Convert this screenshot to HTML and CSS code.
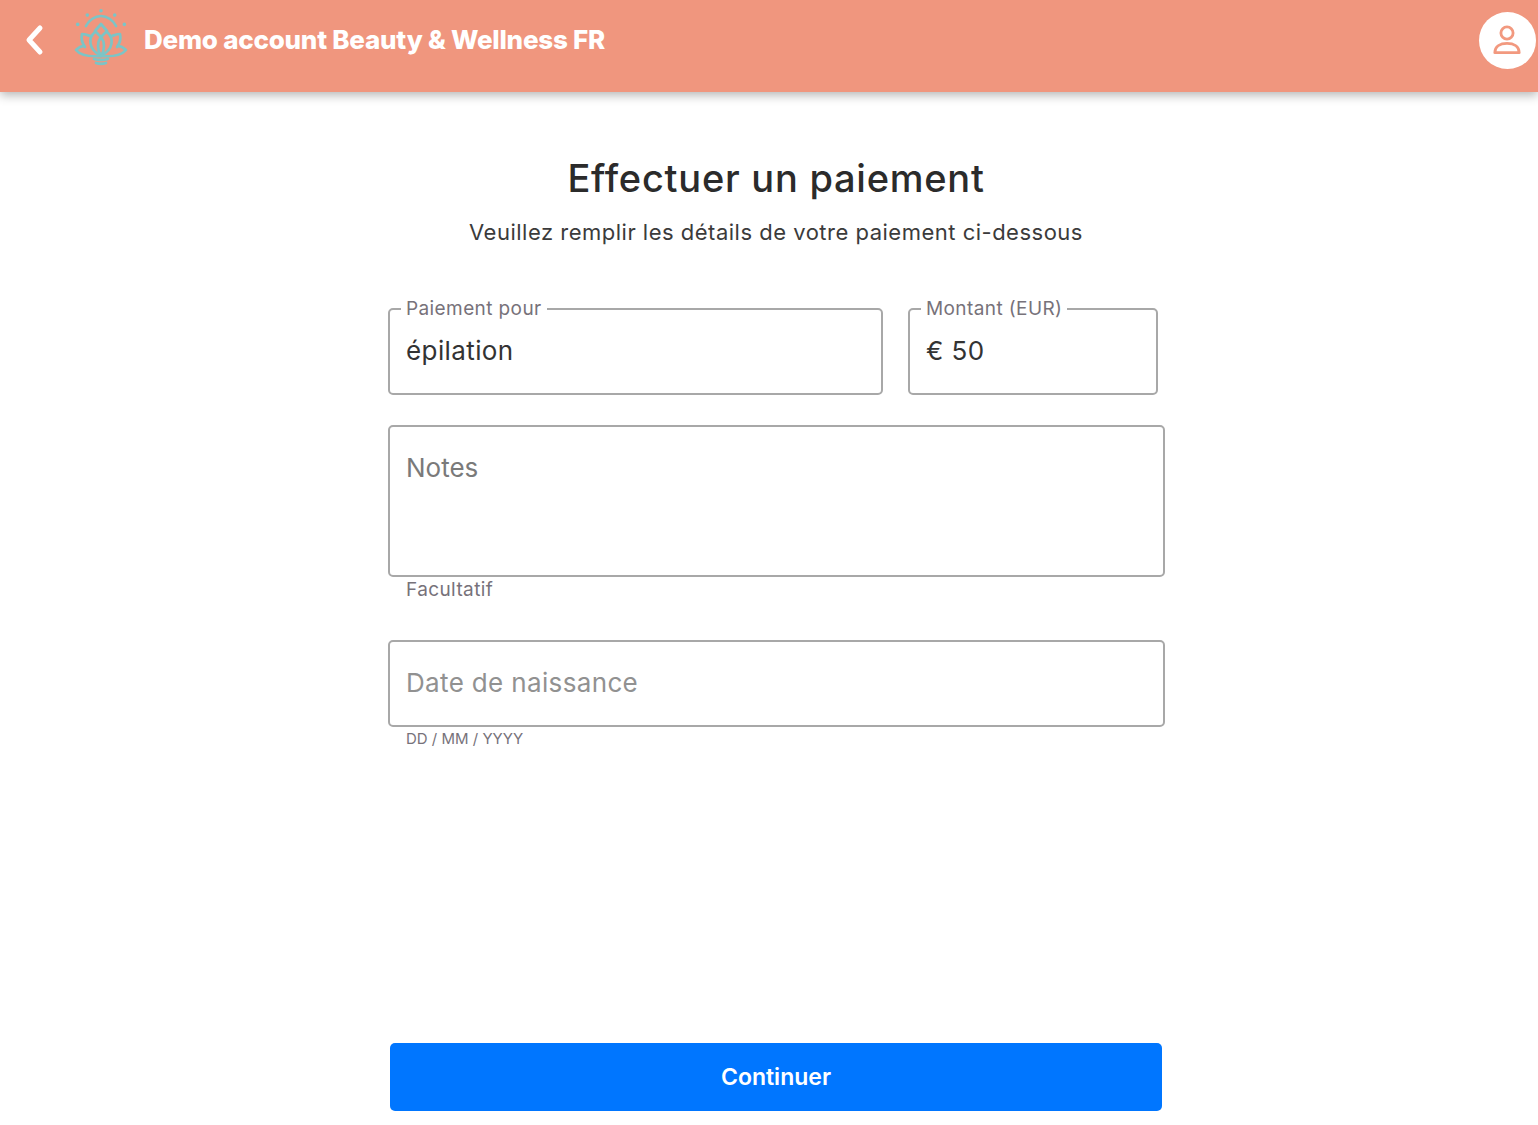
FILE: index.html
```html
<!DOCTYPE html>
<html lang="fr">
  <head>
    <meta charset="UTF-8" />
    <meta name="viewport" content="width=device-width, initial-scale=1.0" />
    <title>Effectuer un paiement</title>
    <link rel="stylesheet" href="styles.css">
  </head>
  <body>
    <header class="topbar">
      <svg class="back" viewBox="0 0 20 32" fill="none" stroke="#fff" stroke-width="5" stroke-linecap="round" stroke-linejoin="round">
        <path d="M16 4 5 16l11 12" />
      </svg>
      <svg class="logo" viewBox="0 0 64 64" fill="none" stroke="#7cc4c6" stroke-width="2.7" stroke-linecap="round" stroke-linejoin="round">
        <path d="M16 21C19 15 25 11 31 11s12 4 15 10" />
        <path d="M31 19l6 7-6 6-6-6Z" />
        <path d="M25 27C18 33 18 44 31 51 44 44 44 33 37 27" />
        <path d="M31 32c-4 5-4 13 0 19 4-6 4-14 0-19Z" />
        <path d="M20 31c-3-1-5-2-8-2-1 4 0 9 3 13" />
        <path d="M42 31c3-1 5-2 8-2 1 4 0 9-3 13" />
        <path d="M14 41c-3 0-6 2-8 4 4 5 12 7 25 6" />
        <path d="M48 41c3 0 6 2 8 4-4 5-12 7-25 6" />
        <path d="M24 54c4 1 10 1 14 0M26 58c3 1 7 1 10 0" />
        <path d="M31 5.7v.1M17.3 10v.1M44.7 10v.1M7.7 19.3v.1M54.3 19.3v.1" stroke-width="3.6" />
      </svg>
      <h2 class="brand">Demo account Beauty &amp; Wellness FR</h2>
      <div class="avatar">
        <svg viewBox="0 0 32 34" fill="none" stroke="#f2997f" stroke-width="3" stroke-linecap="round" stroke-linejoin="round">
          <circle cx="16" cy="9" r="6.5" />
          <path d="M3 30c0-7 6-10 13-10s13 3 13 10Z" />
        </svg>
      </div>
    </header>

    <main class="page">
      <h1 class="title">Effectuer un paiement</h1>
      <p class="subtitle">Veuillez remplir les détails de votre paiement ci-dessous</p>

      <form class="pay-form">
        <div class="row">
          <fieldset class="field field-for">
            <legend>Paiement pour</legend>
            <span class="value">épilation</span>
          </fieldset>
          <fieldset class="field field-amount">
            <legend>Montant (EUR)</legend>
            <span class="value">€ 50</span>
          </fieldset>
        </div>

        <div class="box box-notes"><span class="placeholder dark">Notes</span></div>
        <p class="hint hint-notes">Facultatif</p>

        <div class="box box-date"><span class="placeholder wide">Date de naissance</span></div>
        <p class="hint hint-date">DD / MM / YYYY</p>
      </form>

      <button class="continue" type="button">Continuer</button>
    </main>
  </body>
</html>
```

FILE: styles.css
```css
* {
  margin: 0;
  padding: 0;
  box-sizing: border-box;
}
body {
  height: 1125px;
  overflow: hidden;
  background-color: #fff;
  color: #2b2b2b;
  font-family: "Inter", "Open Sans", sans-serif;
}

.topbar {
  height: 92px;
  display: flex;
  align-items: flex-start;
  background-color: #f0967e;
  box-shadow: 0 3px 10px rgba(0, 0, 0, 0.3);
}
.back {
  width: 20px;
  height: 32px;
  margin: 24px 0 0 24px;
}
.logo {
  width: 64px;
  height: 64px;
  margin: 5px 0 0 26px;
}
.brand {
  margin: 24px 0 0 10px;
  color: #fff;
  font-size: 26px;
  line-height: 32px;
  font-weight: 800;
  letter-spacing: -0.23px;
}
.avatar {
  width: 57px;
  height: 57px;
  margin: 12px 2px 0 auto;
  display: flex;
  align-items: center;
  justify-content: center;
  border-radius: 50%;
  background-color: #fff;
}
.avatar svg {
  width: 30px;
  height: 33px;
  margin-right: 2px;
}

.page {
  width: 776px;
  margin-left: 388px;
  display: flex;
  flex-direction: column;
  align-items: center;
}
.title {
  margin-top: 62px;
  font-size: 38px;
  line-height: 48px;
  font-weight: 500;
  letter-spacing: 0.75px;
}
.subtitle {
  margin-top: 14px;
  color: #3b3b3b;
  font-size: 22px;
  line-height: 32px;
  letter-spacing: 0.5px;
}

.pay-form {
  width: 100%;
  margin-top: 49px;
}
.row {
  display: flex;
  gap: 25px;
}
.field {
  height: 98px;
  padding: 0 16px;
  border: 2px solid #a8a8a8;
  border-radius: 5px;
}
.field legend {
  margin-left: -5px;
  padding: 0 5px;
  color: #77727a;
  font-size: 19px;
  line-height: 24px;
  letter-spacing: 0.4px;
}
.field-for {
  width: 495px;
}
.field-amount {
  width: 250px;
}
.value {
  display: block;
  margin-top: 12px;
  font-size: 26px;
  line-height: 36px;
  letter-spacing: 0.4px;
  color: #333;
}

.box {
  width: 777px;
  padding: 0 16px;
  border: 2px solid #a8a8a8;
  border-radius: 5px;
}
.box-notes {
  height: 152px;
  margin-top: 30px;
  padding-top: 23px;
}
.box-date {
  height: 87px;
  margin-top: 38px;
  padding-top: 23px;
}
.placeholder {
  display: block;
  font-size: 26px;
  line-height: 36px;
  color: #919191;
}
.placeholder.dark {
  color: #7a7a7a;
}
.placeholder.wide {
  letter-spacing: 0.35px;
}
.hint {
  margin-left: 18px;
  color: #77727a;
}
.hint-notes {
  margin-top: 1px;
  font-size: 19px;
  line-height: 24px;
  letter-spacing: 0.4px;
}
.hint-date {
  margin-top: 1px;
  font-size: 15px;
  line-height: 22px;
}

.continue {
  width: 772px;
  height: 68px;
  margin-top: 293px;
  border: 0;
  border-radius: 5px;
  background-color: #0076ff;
  color: #fff;
  font: 600 23px "Inter", sans-serif;
  cursor: pointer;
}
```
